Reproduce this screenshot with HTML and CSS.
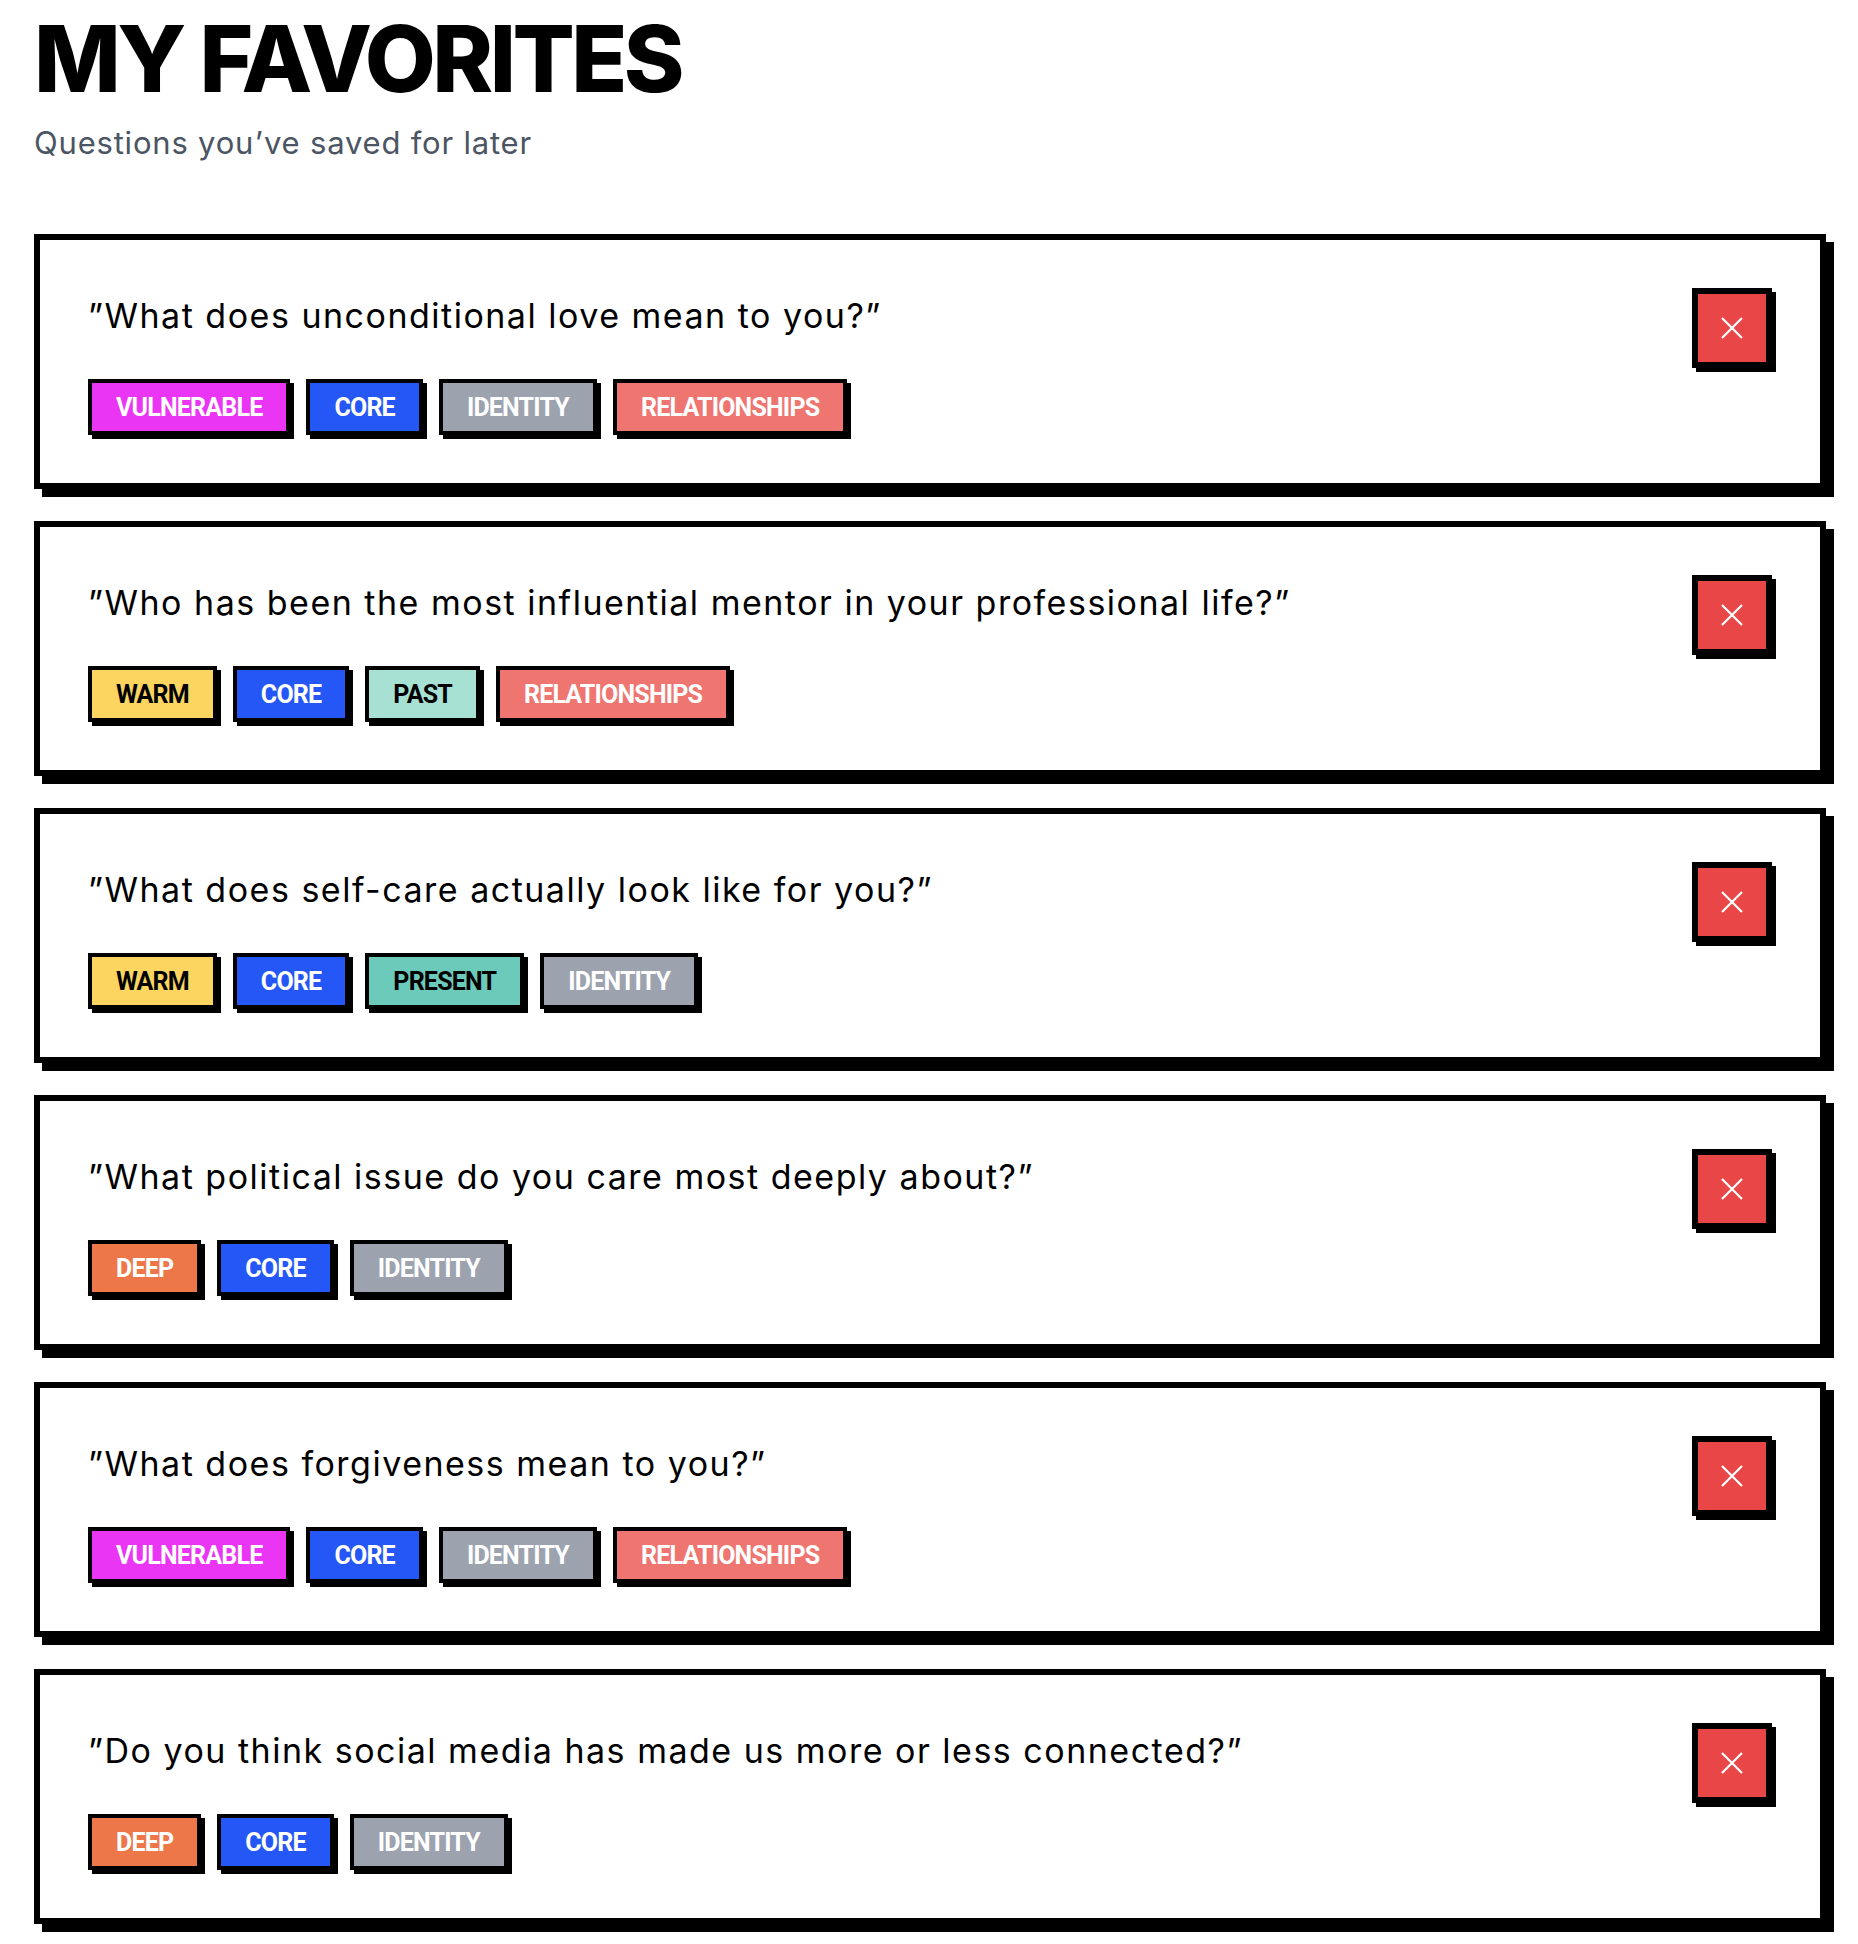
FILE: index.html
```html
<!DOCTYPE html>
<html lang="en">
<head>
<meta charset="utf-8">
<title>My Favorites</title>
<link rel="stylesheet" href="styles.css">
</head>
<body>
<main class="page">
  <header class="page-header">
    <h1 class="title">MY FAVORITES</h1>
    <p class="subtitle">Questions you’ve saved for later</p>
  </header>

  <section class="list">
    <article class="card">
      <div class="card-body">
        <p class="question">”What does unconditional love mean to you?”</p>
        <div class="tags">
          <span class="tag tag-vulnerable">VULNERABLE</span>
          <span class="tag tag-core">CORE</span>
          <span class="tag tag-identity">IDENTITY</span>
          <span class="tag tag-relationships">RELATIONSHIPS</span>
        </div>
      </div>
      <button class="remove" aria-label="Remove"><svg viewBox="0 0 24 24" width="24" height="24"><path d="M2 2 L22 22 M22 2 L2 22" stroke="#fff" stroke-width="2.2" fill="none"/></svg></button>
    </article>

    <article class="card">
      <div class="card-body">
        <p class="question">”Who has been the most influential mentor in your professional life?”</p>
        <div class="tags">
          <span class="tag tag-warm">WARM</span>
          <span class="tag tag-core">CORE</span>
          <span class="tag tag-past">PAST</span>
          <span class="tag tag-relationships">RELATIONSHIPS</span>
        </div>
      </div>
      <button class="remove" aria-label="Remove"><svg viewBox="0 0 24 24" width="24" height="24"><path d="M2 2 L22 22 M22 2 L2 22" stroke="#fff" stroke-width="2.2" fill="none"/></svg></button>
    </article>

    <article class="card">
      <div class="card-body">
        <p class="question">”What does self-care actually look like for you?”</p>
        <div class="tags">
          <span class="tag tag-warm">WARM</span>
          <span class="tag tag-core">CORE</span>
          <span class="tag tag-present">PRESENT</span>
          <span class="tag tag-identity">IDENTITY</span>
        </div>
      </div>
      <button class="remove" aria-label="Remove"><svg viewBox="0 0 24 24" width="24" height="24"><path d="M2 2 L22 22 M22 2 L2 22" stroke="#fff" stroke-width="2.2" fill="none"/></svg></button>
    </article>

    <article class="card">
      <div class="card-body">
        <p class="question">”What political issue do you care most deeply about?”</p>
        <div class="tags">
          <span class="tag tag-deep">DEEP</span>
          <span class="tag tag-core">CORE</span>
          <span class="tag tag-identity">IDENTITY</span>
        </div>
      </div>
      <button class="remove" aria-label="Remove"><svg viewBox="0 0 24 24" width="24" height="24"><path d="M2 2 L22 22 M22 2 L2 22" stroke="#fff" stroke-width="2.2" fill="none"/></svg></button>
    </article>

    <article class="card">
      <div class="card-body">
        <p class="question">”What does forgiveness mean to you?”</p>
        <div class="tags">
          <span class="tag tag-vulnerable">VULNERABLE</span>
          <span class="tag tag-core">CORE</span>
          <span class="tag tag-identity">IDENTITY</span>
          <span class="tag tag-relationships">RELATIONSHIPS</span>
        </div>
      </div>
      <button class="remove" aria-label="Remove"><svg viewBox="0 0 24 24" width="24" height="24"><path d="M2 2 L22 22 M22 2 L2 22" stroke="#fff" stroke-width="2.2" fill="none"/></svg></button>
    </article>

    <article class="card">
      <div class="card-body">
        <p class="question">”Do you think social media has made us more or less connected?”</p>
        <div class="tags">
          <span class="tag tag-deep">DEEP</span>
          <span class="tag tag-core">CORE</span>
          <span class="tag tag-identity">IDENTITY</span>
        </div>
      </div>
      <button class="remove" aria-label="Remove"><svg viewBox="0 0 24 24" width="24" height="24"><path d="M2 2 L22 22 M22 2 L2 22" stroke="#fff" stroke-width="2.2" fill="none"/></svg></button>
    </article>
  </section>
</main>
</body>
</html>
```

FILE: styles.css
```css
* { box-sizing: border-box; }

html, body {
  margin: 0;
  padding: 0;
  background: #ffffff;
}

body {
  font-family: "Inter", "Liberation Sans", sans-serif;
  color: #000;
}

.page {
  padding: 9px 32px 40px 34px;
}

.page-header {
  margin-bottom: 71px;
}

.title {
  margin: 0;
  font-family: "Inter", "Liberation Sans", sans-serif;
  font-weight: 800;
  font-size: 92px;
  line-height: 100px;
  letter-spacing: -3.5px;
  color: #000;
}

.subtitle {
  margin: 14px 0 0 0;
  font-family: "Inter", "Liberation Sans", sans-serif;
  font-size: 31px;
  line-height: 40px;
  letter-spacing: 0.8px;
  color: #4b5563;
}

.list {
  display: flex;
  flex-direction: column;
  gap: 32px;
}

.card {
  display: flex;
  justify-content: space-between;
  align-items: flex-start;
  border: 6px solid #000;
  box-shadow: 8px 8px 0 #000;
  background: #fff;
  padding: 48px;
  height: 255px;
}

.card-body {
  display: flex;
  flex-direction: column;
}

.question {
  margin: 0 0 36px 0;
  font-family: "Inter", "Liberation Sans", sans-serif;
  font-size: 34px;
  line-height: 55px;
  letter-spacing: 1.5px;
  font-weight: 400;
  color: #000;
}

.tags {
  display: flex;
  gap: 16px;
}

.tag {
  display: inline-flex;
  align-items: center;
  height: 56px;
  padding: 0 24px;
  border: 4px solid #000;
  box-shadow: 4px 4px 0 #000;
  font-family: "Roboto", "Liberation Sans", sans-serif;
  font-weight: 700;
  font-size: 25px;
  letter-spacing: -0.8px;
  color: #fff;
}

.tag-vulnerable { background: #ea35f4; }
.tag-core { background: #2557f6; }
.tag-identity { background: #9ca3af; }
.tag-relationships { background: #ef7571; }
.tag-warm { background: #fbd560; color: #000; }
.tag-past { background: #a6e1d3; color: #000; }
.tag-present { background: #6ccabb; color: #000; }
.tag-deep { background: #ee774a; }

.remove {
  flex: none;
  width: 80px;
  height: 80px;
  padding: 0;
  margin: 0;
  display: flex;
  align-items: center;
  justify-content: center;
  border: 6px solid #000;
  box-shadow: 4px 4px 0 #000;
  background: #e94747;
  cursor: pointer;
}

.remove svg { display: block; }
```
